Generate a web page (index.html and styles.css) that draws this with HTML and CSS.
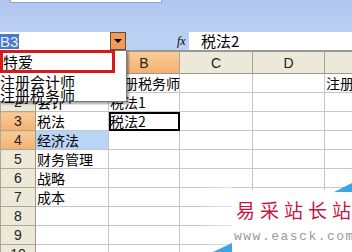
FILE: index.html
```html
<!DOCTYPE html>
<html lang="zh">
<head>
  <meta charset="UTF-8" />
  <title>Excel 数据有效性</title>
  <link rel="stylesheet" href="styles.css">
</head>
<body>
  <div class="toolbar">
    <div class="tb-strip"></div>
  </div>

  <div class="formula-bar">
    <div class="name-box"><span class="ref">B3</span></div>
    <div class="drop-btn"><span class="arrow"></span></div>
    <span class="fx">fx</span>
    <div class="formula">税法2</div>
  </div>

  <table class="sheet">
    <colgroup>
      <col class="c-head"><col class="c-a"><col class="c-b"><col class="c-c"><col class="c-d"><col class="c-e">
    </colgroup>
    <tr class="col-heads">
      <th class="corner"></th><th>A</th><th class="sel">B</th><th>C</th><th>D</th><th></th>
    </tr>
    <tr><th>1</th><td>注册会计师</td><td>注册税务师</td><td></td><td></td><td>注册</td></tr>
    <tr><th>2</th><td>会计</td><td>税法1</td><td></td><td></td><td></td></tr>
    <tr><th class="sel">3</th><td>税法</td><td class="active">税法2</td><td></td><td></td><td></td></tr>
    <tr><th class="sel">4</th><td class="hl">经济法</td><td></td><td></td><td></td><td></td></tr>
    <tr><th>5</th><td>财务管理</td><td></td><td></td><td></td><td></td></tr>
    <tr><th>6</th><td>战略</td><td></td><td></td><td></td><td></td></tr>
    <tr><th>7</th><td>成本</td><td></td><td></td><td></td><td></td></tr>
    <tr><th>8</th><td></td><td></td><td></td><td></td><td></td></tr>
    <tr><th>9</th><td></td><td></td><td></td><td></td><td></td></tr>
    <tr><th>10</th><td></td><td></td><td></td><td></td><td></td></tr>
  </table>

  <div class="dropdown">
    <div class="item picked">特爱</div>
    <div class="item">注册会计师</div>
    <div class="item">注册税务师</div>
  </div>

  <div class="watermark">
    <div class="wm-panel">
      <div class="wm-title">易采站长站</div>
      <div class="wm-url">www.easck.com</div>
    </div>
    <span class="tri tri-top"></span>
    <span class="tri tri-bottom"></span>
  </div>
</body>
</html>
```

FILE: styles.css
```css
html, body {
  margin: 0;
  width: 352px;
  height: 252px;
  overflow: hidden;
}

body {
  position: relative;
  font-family: "Liberation Sans", "Noto Sans CJK SC", sans-serif;
  font-size: 14px;
  color: #000;
  background: #fff;
}

.toolbar {
  height: 32px;
  background: linear-gradient(#b0c6ef, #bcd0f3);
}

.tb-strip {
  margin-left: 10px;
  width: 150px;
  height: 2px;
  background: #fff;
  border: 1px solid #8aa4d6;
  border-top: none;
}

.formula-bar {
  display: flex;
  align-items: stretch;
  height: 18px;
  background: #bcd0f3;
}

.name-box {
  width: 110px;
  background: #fff;
  display: flex;
  align-items: center;
}

.ref {
  background: #4a78cc;
  color: #e8f0ff;
  font-size: 15px;
  line-height: 15px;
  padding: 0 1px 0 0;
}

.drop-btn {
  width: 14px;
  background: #f39a58;
  border: 1px solid #6a4a38;
  display: flex;
  align-items: center;
  justify-content: center;
}

.arrow {
  width: 0;
  height: 0;
  border-left: 4px solid transparent;
  border-right: 4px solid transparent;
  border-top: 4px solid #000;
}

.fx {
  margin-left: 51px;
  width: 12px;
  font-family: "Liberation Serif", serif;
  font-style: italic;
  font-size: 12px;
  line-height: 18px;
}

.formula {
  flex: 1;
  background: #fff;
  padding-left: 12px;
  font-family: "Noto Sans CJK SC", sans-serif;
  font-size: 15px;
  line-height: 18px;
}

.sheet {
  border-collapse: collapse;
  table-layout: fixed;
  width: 352px;
  font-family: "Noto Sans CJK SC", sans-serif;
  font-size: 14px;
}

.c-head { width: 35px; }
.c-a { width: 73px; }
.c-b { width: 71px; }
.c-c { width: 73px; }
.c-d { width: 72px; }
.c-e { width: 28px; }

.sheet th {
  background: #ece9d8;
  font-family: "Liberation Sans", sans-serif;
  font-weight: normal;
  font-size: 14px;
  color: #222;
  border: 1px solid #aca899;
  padding: 0;
  height: 18px;
  line-height: 18px;
}

.sheet tr.col-heads th {
  height: 21px;
  border-top: 2px solid #9a9890;
  border-bottom: 1px solid #9a9890;
}

.sheet tr > th:first-child {
  text-align: center;
  border-right: 1px solid #9a9890;
}

.sheet th.sel {
  background: linear-gradient(#f9cc98, #f4b070);
}

.sheet td {
  border: 1px solid #c6c6c6;
  padding: 0 1px;
  height: 18px;
  line-height: 18px;
  white-space: nowrap;
  overflow: hidden;
}

.sheet td:nth-child(3) {
  overflow: visible;
}

.sheet td.hl {
  background: #b8d4f6;
}

.sheet td.active {
  outline: 2px solid #000;
  outline-offset: -2px;
}

.dropdown {
  position: absolute;
  left: 0;
  top: 50px;
  width: 126px;
  height: 50px;
  background: #fff;
  border: 1px solid #7a7a7a;
  border-left: none;
  box-shadow: 2px 2px 2px rgba(0, 0, 0, 0.35);
  font-family: "Noto Sans CJK SC", sans-serif;
  font-size: 15px;
}

.item {
  line-height: 14px;
  height: 14px;
  white-space: nowrap;
}

.item.picked {
  height: 17px;
  line-height: 17px;
  width: 109px;
  border: 3px solid #d61a1a;
  margin-top: -1px;
  margin-bottom: 2px;
}

.watermark {
  position: absolute;
  left: 200px;
  top: 183px;
  width: 152px;
  height: 69px;
  background: linear-gradient(90deg, rgba(255, 255, 255, 0) 0, rgba(255, 255, 255, 0.6) 32px, rgba(255, 255, 255, 0) 33px);
}

.wm-panel {
  margin: 7px 0 0 32px;
  height: 62px;
  background: #fff;
  overflow: hidden;
}

.tri {
  position: absolute;
  width: 0;
  height: 0;
}

.tri-top {
  right: 0;
  top: 0;
  border-left: 18px solid transparent;
  border-bottom: 9px solid #3aa6e6;
}

.tri-bottom {
  left: 13px;
  bottom: 0;
  border-left: 19px solid transparent;
  border-bottom: 9px solid #3aa6e6;
}

.wm-title {
  padding: 8px 0 0 4px;
  color: #c8143e;
  font-family: "Noto Sans CJK SC", sans-serif;
  font-size: 19px;
  line-height: 24px;
  letter-spacing: 5px;
  white-space: nowrap;
}

.wm-url {
  margin: 7px 0 0 2px;
  color: #9a9a9a;
  font-family: "Liberation Mono", monospace;
  font-size: 13px;
  letter-spacing: 1.5px;
  white-space: nowrap;
}
```
